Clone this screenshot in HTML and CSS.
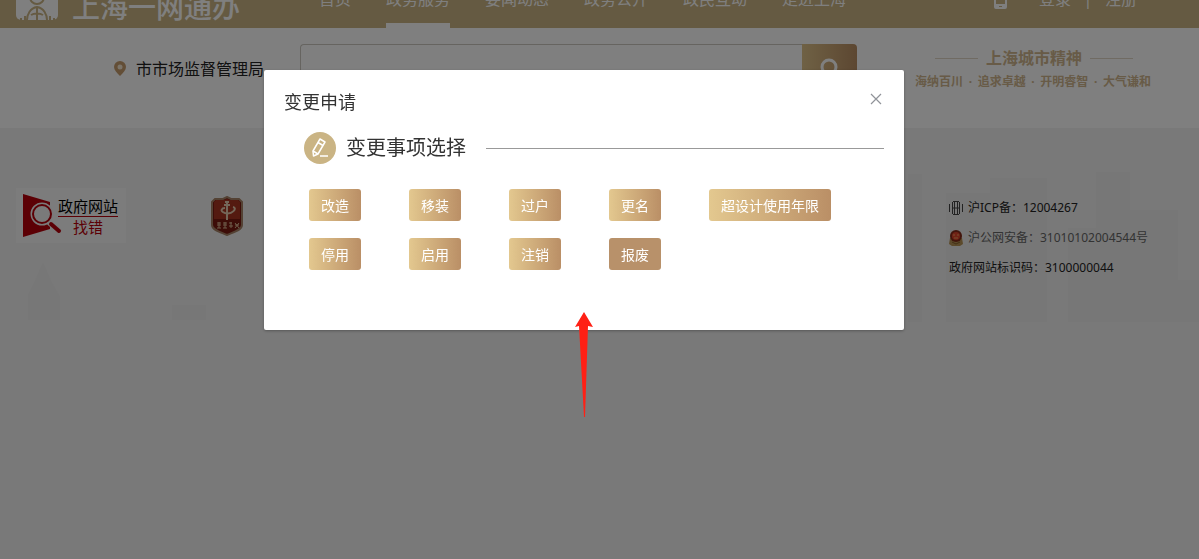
FILE: index.html
```
<!DOCTYPE html>
<html lang="zh-CN">
<head>
    <meta charset="UTF-8">
    <meta name="viewport" content="width=device-width, initial-scale=1">
    <title>变更申请 - 上海一网通办</title>
    <link rel="stylesheet" href="styles.css">
</head>
<body>
    <header class="header">
        <a href="#" class="logo">
            <svg class="logo-icon" viewBox="0 0 42 42" aria-hidden="true">
                <rect width="42" height="42" rx="5" fill="#fff"/>
                <g fill="none" stroke="#cab484" stroke-width="2">
                    <circle cx="21" cy="19" r="7"/>
                    <path d="M11 42c0-5 3-12 10-13 7 1 10 8 10 13M21 29v13M15 37c3-2 9-2 12 0M5 42v-2M9 42v-4M34 42v-4M38 42v-2"/>
                </g>
            </svg>
            <span class="logo-text">上海一网通办</span>
        </a>
        <nav class="nav">
            <a href="#">首页</a>
            <a href="#" class="active">政务服务</a>
            <a href="#">要闻动态</a>
            <a href="#">政务公开</a>
            <a href="#">政民互动</a>
            <a href="#">走进上海</a>
        </nav>
        <div class="user">
            <svg class="phone" viewBox="0 0 13 20" aria-hidden="true">
                <path fill="#fff" fill-rule="evenodd" d="M2 0h9a2 2 0 0 1 2 2v16a2 2 0 0 1-2 2H2a2 2 0 0 1-2-2V2a2 2 0 0 1 2-2zM2 3v12h9V3zM5 17v1h3v-1z"/>
            </svg>
            <a href="#">登录</a>
            <span class="divider">|</span>
            <a href="#">注册</a>
        </div>
    </header>

    <section class="search-row">
        <div class="location">
            <svg class="pin" viewBox="0 0 12 15" aria-hidden="true">
                <path fill="#c69c6d" d="M6 0a6 6 0 0 1 6 6c0 3-3 6-6 9-3-3-6-6-6-9a6 6 0 0 1 6-6z"/>
                <circle cx="6" cy="6" r="2.5" fill="#f6e8d2"/>
            </svg>
            <span>市市场监督管理局</span>
        </div>
        <form class="search">
            <input type="text" class="search-input" aria-label="搜索">
            <button type="button" class="search-btn" aria-label="搜索">
                <svg viewBox="0 0 20 20" aria-hidden="true">
                    <circle cx="9" cy="9" r="7" fill="none" stroke="#fff" stroke-width="3"/>
                    <path d="M14 14l5 5" stroke="#fff" stroke-width="3"/>
                </svg>
            </button>
        </form>
        <div class="slogan">
            <div class="slogan-title">上海城市精神</div>
            <div class="slogan-text">
                <span>海纳百川</span><i>·</i><span>追求卓越</span><i>·</i><span>开明睿智</span><i>·</i><span>大气谦和</span>
            </div>
        </div>
    </section>

    <footer class="footer">
        <a href="#" class="find-error">
            <svg viewBox="0 0 40 44" aria-hidden="true">
                <path d="M0 0l27 8v27L0 43z" fill="#b8000a"/>
                <circle cx="19" cy="20" r="9" fill="#b8000a" stroke="#f5f5f5" stroke-width="5"/>
                <circle cx="19" cy="20" r="9" fill="#f5f5f5" stroke="#b8000a" stroke-width="2"/>
                <path d="M26 28l11 10" stroke="#f5f5f5" stroke-width="6"/>
                <path d="M28 30l8 7" stroke="#b8000a" stroke-width="4" stroke-linecap="round"/>
            </svg>
            <span class="find-text">
                <b>政府网站</b>
                <em>找错</em>
            </span>
        </a>
        <a href="#" class="shield" aria-label="党政机关">
            <svg viewBox="0 0 32 40" aria-hidden="true">
                <path d="M16 1l4 2h8l3 3v23c0 5-8 7-15 10C9 36 1 34 1 29V6l3-3h8z" fill="#7a1a10" stroke="#a88468" stroke-width="2"/>
                <path d="M3 6l2-2h8l3-1 3 1h8l2 2v17H3z" fill="#a83420"/>
                <g fill="none" stroke="#e8cdb0" stroke-width="2">
                    <path d="M16 6v18M13 9h6M14 6h4"/>
                    <path d="M22 11c5 1-1 8-8 6-6-2-3-5 0-5"/>
                </g>
                <path d="M6 27h4m-2-1v6m-2-3h4m-4 3h4M12 27h4m-2-1v6m-2-3h4m-4 3h4M18 27h3m-1-1v6m-2-2h4M24 27l4 5m0-5l-4 5m0-3h4" stroke="#dcb894" fill="none"/>
            </svg>
        </a>
        <ul class="record">
            <li class="dark">
                <svg viewBox="0 0 14 16" aria-hidden="true">
                    <path d="M.5 4v8M13.5 4v8M3.5 2v12M10.5 2v12M5.500 1v14M8.500 1v14M4 1.500h6M4 14.500h6M3 8h8" fill="none" stroke="#444"/>
                </svg>
                <a href="#">沪ICP备：12004267</a>
            </li>
            <li>
                <svg viewBox="0 0 14 16" aria-hidden="true">
                    <path d="M1 8h12l1 6-3 2H3l-3-2z" fill="#b89456"/>
                    <circle cx="7" cy="6" r="6" fill="#842a18"/>
                    <circle cx="7" cy="6" r="4" fill="#e0442a"/>
                    <path d="M4 5h2m2 0h2M5 8h4" stroke="#f0a060"/>
                    <path d="M3 12l4 2 4-2" fill="none" stroke="#86602c"/>
                </svg>
                <a href="#">沪公网安备：31010102004544号</a>
            </li>
            <li class="dark">政府网站标识码：3100000044</li>
        </ul>
        <svg class="skyline" viewBox="0 0 1199 154" preserveAspectRatio="none" aria-hidden="true">
            <path d="M28 152v-26l6-12 9-20 9 20 8 14v24zM172 137h34v15h-34zM908 6h14v148h-14zM946 25h44V10h57v144H946zM1068 60h28V4h34v38h48v70h21v42H1068z" fill="#efefef"/>
        </svg>
    </footer>

    <div class="mask">
        <div class="dialog" role="dialog" aria-labelledby="dialog-title">
            <div class="dialog-header">
                <h2 id="dialog-title">变更申请</h2>
                <button type="button" class="close" aria-label="关闭">
                    <svg viewBox="0 0 12 12" aria-hidden="true">
                        <path d="M1 1l10 10M11 1L1 11" stroke="#909399" stroke-width="1.200"/>
                    </svg>
                </button>
            </div>
            <div class="dialog-body">
                <div class="section-title">
                    <svg class="edit-icon" viewBox="0 0 32 32" aria-hidden="true">
                        <circle cx="16" cy="16" r="16" fill="#cab484"/>
                        <g fill="none" stroke="#fff" stroke-width="1.500" stroke-linejoin="round">
                            <path d="M16 7l5 3-7 12-4.500 2-.5-5z"/>
                            <path d="M14 10.500l5 3M9 19l5 3"/>
                            <path d="M16 24h8"/>
                        </g>
                    </svg>
                    <h3>变更事项选择</h3>
                </div>
                <div class="btn-grid">
                    <button type="button" class="btn">改造</button>
                    <button type="button" class="btn">移装</button>
                    <button type="button" class="btn">过户</button>
                    <button type="button" class="btn">更名</button>
                    <button type="button" class="btn">超设计使用年限</button>
                    <button type="button" class="btn">停用</button>
                    <button type="button" class="btn">启用</button>
                    <button type="button" class="btn">注销</button>
                    <button type="button" class="btn current">报废</button>
                </div>
            </div>
            <svg class="arrow" viewBox="0 0 18 106" aria-hidden="true">
                <path d="M9 0l9 15-5-1-3 91H9L4 14l-4 1z" fill="#ff2015"/>
            </svg>
        </div>
    </div>
</body>
</html>
```
FILE: styles.css
```
* {
    box-sizing: border-box;
}
body {
    margin: 0;
    min-height: 100vh;
    display: flex;
    flex-direction: column;
    background-color: #f3f3f3;
    color: #333;
    font-family: "Noto Sans", "Noto Sans CJK SC", sans-serif;
    font-size: 16px;
    overflow: hidden;
}
a {
    color: inherit;
    text-decoration: none;
}
svg {
    display: block;
    flex: none;
}

/* 顶部导航（已向上滚动） */
.header {
    display: flex;
    align-items: center;
    height: 58px;
    margin-top: -30px;
    padding: 0 62px 0 16px;
    background-color: #cab484;
    color: #fff;
}
.logo {
    display: flex;
    align-items: center;
    gap: 14px;
    width: 303px;
}
.logo-icon {
    width: 42px;
    height: 42px;
}
.logo-text {
    padding-top: 16px;
    font-size: 28px;
    line-height: 32px;
    font-weight: 500;
    white-space: nowrap;
}
.nav {
    display: flex;
    gap: 35px;
    height: 100%;
}
.nav a {
    line-height: 58px;
    white-space: nowrap;
}
.nav .active {
    border-bottom: 5px solid #fff;
}
.user {
    display: flex;
    align-items: center;
    margin-left: auto;
    line-height: 58px;
}
.phone {
    width: 13px;
    height: 20px;
    margin-right: 32px;
}
.divider {
    width: 34px;
    text-align: center;
}

/* 搜索栏 */
.search-row {
    display: grid;
    grid-template-columns: 300px 1fr 342px;
    height: 100px;
    padding-top: 16px;
    background-color: #fff;
}
.location {
    display: flex;
    align-items: center;
    gap: 10px;
    height: 48px;
    padding-left: 114px;
    color: #222;
    white-space: nowrap;
}
.pin {
    width: 12px;
    height: 15px;
}
.search {
    display: flex;
    height: 48px;
}
.search-input {
    flex: 1;
    min-width: 0;
    border: 1px solid #ccc8c0;
    border-right: 0;
    border-radius: 4px 0 0 4px;
    background-color: #fff;
}
.search-btn {
    display: flex;
    align-items: center;
    justify-content: center;
    width: 55px;
    border: 0;
    border-radius: 0 4px 4px 0;
    background-image: linear-gradient(to right, #dfc38a, #b98e63);
}
.search-btn svg {
    width: 20px;
    height: 20px;
}
.slogan {
    width: 236px;
    margin-left: 58px;
    color: #d0b68e;
    font-weight: bold;
    white-space: nowrap;
}
.slogan-title {
    display: flex;
    align-items: center;
    gap: 8px;
    padding: 0 18px 0 20px;
    line-height: 28px;
}
.slogan-title::before,
.slogan-title::after {
    content: "";
    flex: 1;
    height: 1px;
    background-color: #e0d6c6;
}
.slogan-text {
    display: flex;
    justify-content: space-between;
    font-size: 12px;
    line-height: 20px;
}
.slogan-text i {
    font-style: normal;
}

/* 页脚 */
.footer {
    position: relative;
    display: flex;
    align-items: flex-start;
    padding: 60px 0 60px 16px;
}
.find-error {
    display: flex;
    align-items: center;
    gap: 2px;
    width: 110px;
    height: 55px;
    padding-left: 7px;
    background-color: #f8f8f8;
}
.find-error svg {
    width: 40px;
    height: 44px;
    margin-right: -7px;
}
.find-text {
    display: flex;
    flex-direction: column;
    padding-top: 2px;
    text-align: center;
    color: #b8000a;
    font-size: 15px;
    line-height: 20px;
    white-space: nowrap;
}
.find-text b {
    border-bottom: 1px solid #b8000a;
    color: #000;
    font-weight: normal;
}
.find-text em {
    font-style: normal;
}
.shield {
    margin: 8px 0 0 85px;
}
.shield svg {
    width: 32px;
    height: 40px;
}
.record {
    width: 250px;
    margin: 5px 0 0 auto;
    padding: 0;
    list-style: none;
    color: #666;
    font-size: 12px;
    line-height: 30px;
}
.record li {
    display: flex;
    align-items: center;
    gap: 5px;
}
.record .dark {
    color: #222;
}
.record svg {
    width: 14px;
    height: 16px;
}
.skyline {
    position: absolute;
    top: 40px;
    left: 0;
    z-index: -1;
    width: 100%;
    height: 154px;
}

/* 弹窗 */
.mask {
    position: fixed;
    inset: 0;
    padding: 70px 31px 0 0;
    background-color: rgba(0, 0, 0, 0.5);
}
.dialog {
    position: relative;
    max-width: 640px;
    margin: 0 auto;
    border-radius: 2px;
    background-color: #fff;
    box-shadow: 0 1px 3px rgba(0, 0, 0, 0.3);
}
.dialog-header {
    display: flex;
    align-items: center;
    justify-content: space-between;
    padding: 20px 20px 10px;
}
.dialog-header h2 {
    margin: 0;
    font-size: 18px;
    font-weight: normal;
    line-height: 24px;
}
.close {
    padding: 2px;
    margin-bottom: 6px;
    border: 0;
    background: none;
}
.close svg {
    width: 12px;
    height: 12px;
}
.dialog-body {
    padding: 8px 20px 60px 40px;
}
.section-title {
    display: flex;
    align-items: center;
}
.section-title::after {
    content: "";
    flex: 1;
    height: 1px;
    margin-left: 20px;
    background-color: #999;
}
.edit-icon {
    width: 32px;
    height: 32px;
    margin-right: 10px;
}
.section-title h3 {
    margin: 0;
    font-size: 20px;
    font-weight: normal;
    line-height: 32px;
}
.btn-grid {
    display: grid;
    grid-template-columns: repeat(5, 100px);
    gap: 17px 0;
    justify-items: start;
    padding: 25px 0 0 5px;
}
.btn {
    height: 32px;
    padding: 0 12px;
    border: 0;
    border-radius: 3px;
    background-image: linear-gradient(to right, #e3c88f, #ba8f66);
    color: #fff;
    font-family: inherit;
    font-size: 14px;
    white-space: nowrap;
}
.btn.current {
    background: #b8916a;
}
.arrow {
    position: absolute;
    top: 242px;
    left: 311px;
    width: 18px;
    height: 106px;
}
```
